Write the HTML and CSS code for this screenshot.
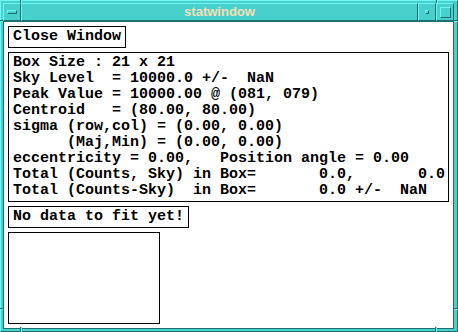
FILE: index.html
```html
<!DOCTYPE html>
<html>
<head>
<meta charset="utf-8">
<title>statwindow</title>
<link rel="stylesheet" href="styles.css">
</head>
<body>
<div class="frame">
  <div class="titlebar">
    <div class="tbtn"><span class="menu-bar"></span></div>
    <div class="title">statwindow</div>
    <div class="tbtn"><span class="min-dot"></span></div>
    <div class="tbtn"><span class="max-box"></span></div>
  </div>
  <div class="content">
    <div class="pbutton">Close Window</div>
    <pre class="stats">Box Size : 21 x 21
Sky Level  = 10000.0 +/-  NaN
Peak Value = 10000.00 @ (081, 079)
Centroid   = (80.00, 80.00)
sigma (row,col) = (0.00, 0.00)
      (Maj,Min) = (0.00, 0.00)
eccentricity = 0.00,   Position angle = 0.00
Total (Counts, Sky) in Box=       0.0,       0.0
Total (Counts-Sky)  in Box=       0.0 +/-  NaN</pre>
    <div class="pbutton">No data to fit yet!</div>
    <div class="plot"></div>
  </div>
  <span class="cut cut-v cut-top-l"></span>
  <span class="cut cut-v cut-top-r"></span>
  <span class="cut cut-v cut-bot-l"></span>
  <span class="cut cut-v cut-bot-r"></span>
  <span class="cut cut-h cut-left-t"></span>
  <span class="cut cut-h cut-left-b"></span>
  <span class="cut cut-h cut-right-t"></span>
  <span class="cut cut-h cut-right-b"></span>
</div>
</body>
</html>
```
FILE: styles.css
```css
html, body {
  margin: 0;
  padding: 0;
}
body {
  width: 458px;
  height: 332px;
  overflow: hidden;
  background: #48d1cc;
}
.frame {
  position: relative;
  box-sizing: border-box;
  width: 458px;
  height: 332px;
  background: #48d1cc;
  border-top: 1px solid #6ef7f2;
  border-left: 1px solid #6ef7f2;
  border-right: 1px solid #1f706c;
  border-bottom: 1px solid #1f706c;
  padding: 2px 3px 4px 2px;
  display: flex;
  flex-direction: column;
}
.titlebar {
  display: flex;
  height: 18px;
}
.tbtn, .title {
  box-sizing: border-box;
  height: 18px;
  border-top: 1px solid #6ef7f2;
  border-left: 1px solid #6ef7f2;
  border-right: 1px solid #1f706c;
  border-bottom: 1px solid #1f706c;
  background: #48d1cc;
}
.tbtn {
  width: 18px;
  display: flex;
  align-items: center;
  justify-content: center;
}
.title {
  flex: 1;
  text-align: center;
  font-family: "Liberation Sans", Arial, sans-serif;
  font-weight: bold;
  font-size: 13px;
  line-height: 16px;
  color: #f5deb3;
}
.menu-bar {
  box-sizing: border-box;
  width: 10px;
  height: 4px;
  border-top: 1px solid #6ef7f2;
  border-left: 1px solid #6ef7f2;
  border-right: 1px solid #1f706c;
  border-bottom: 1px solid #1f706c;
}
.min-dot {
  box-sizing: border-box;
  width: 4px;
  height: 4px;
  border-top: 1px solid #6ef7f2;
  border-left: 1px solid #6ef7f2;
  border-right: 1px solid #1f706c;
  border-bottom: 1px solid #1f706c;
}
.max-box {
  box-sizing: border-box;
  width: 11px;
  height: 11px;
  border-top: 1px solid #6ef7f2;
  border-left: 1px solid #6ef7f2;
  border-right: 1px solid #1f706c;
  border-bottom: 1px solid #1f706c;
}
.content {
  flex: 1;
  background: #ffffff;
  border: 1px solid #1f706c;
  padding: 4px;
  display: flex;
  flex-direction: column;
  align-items: flex-start;
  gap: 4px;
  font-family: "Liberation Mono", "Courier New", monospace;
  font-weight: bold;
  font-size: 15px;
  color: #000;
}
.pbutton {
  border: 1px solid #000;
  padding: 0 4px;
  line-height: 20px;
  white-space: pre;
}
.stats {
  align-self: stretch;
  margin: 0;
  border: 1px solid #000;
  padding: 2px 4px;
  font: inherit;
  line-height: 16px;
  white-space: pre;
}
.plot {
  width: 150px;
  height: 90px;
  border: 1px solid #000;
}
.cut {
  position: absolute;
  box-sizing: border-box;
}
.cut-v {
  width: 2px;
  border-left: 1px solid #1f706c;
  border-right: 1px solid #6ef7f2;
}
.cut-h {
  height: 2px;
  border-top: 1px solid #1f706c;
  border-bottom: 1px solid #6ef7f2;
}
.cut-top-l { left: 19px; top: -1px; height: 3px; }
.cut-top-r { left: 435px; top: -1px; height: 3px; }
.cut-bot-l { left: 19px; bottom: -1px; height: 5px; }
.cut-bot-r { left: 434px; bottom: -1px; height: 5px; }
.cut-left-t { left: -1px; top: 19px; width: 3px; }
.cut-left-b { left: -1px; top: 307px; width: 3px; }
.cut-right-t { right: -1px; top: 19px; width: 4px; }
.cut-right-b { right: -1px; top: 307px; width: 4px; }
```
